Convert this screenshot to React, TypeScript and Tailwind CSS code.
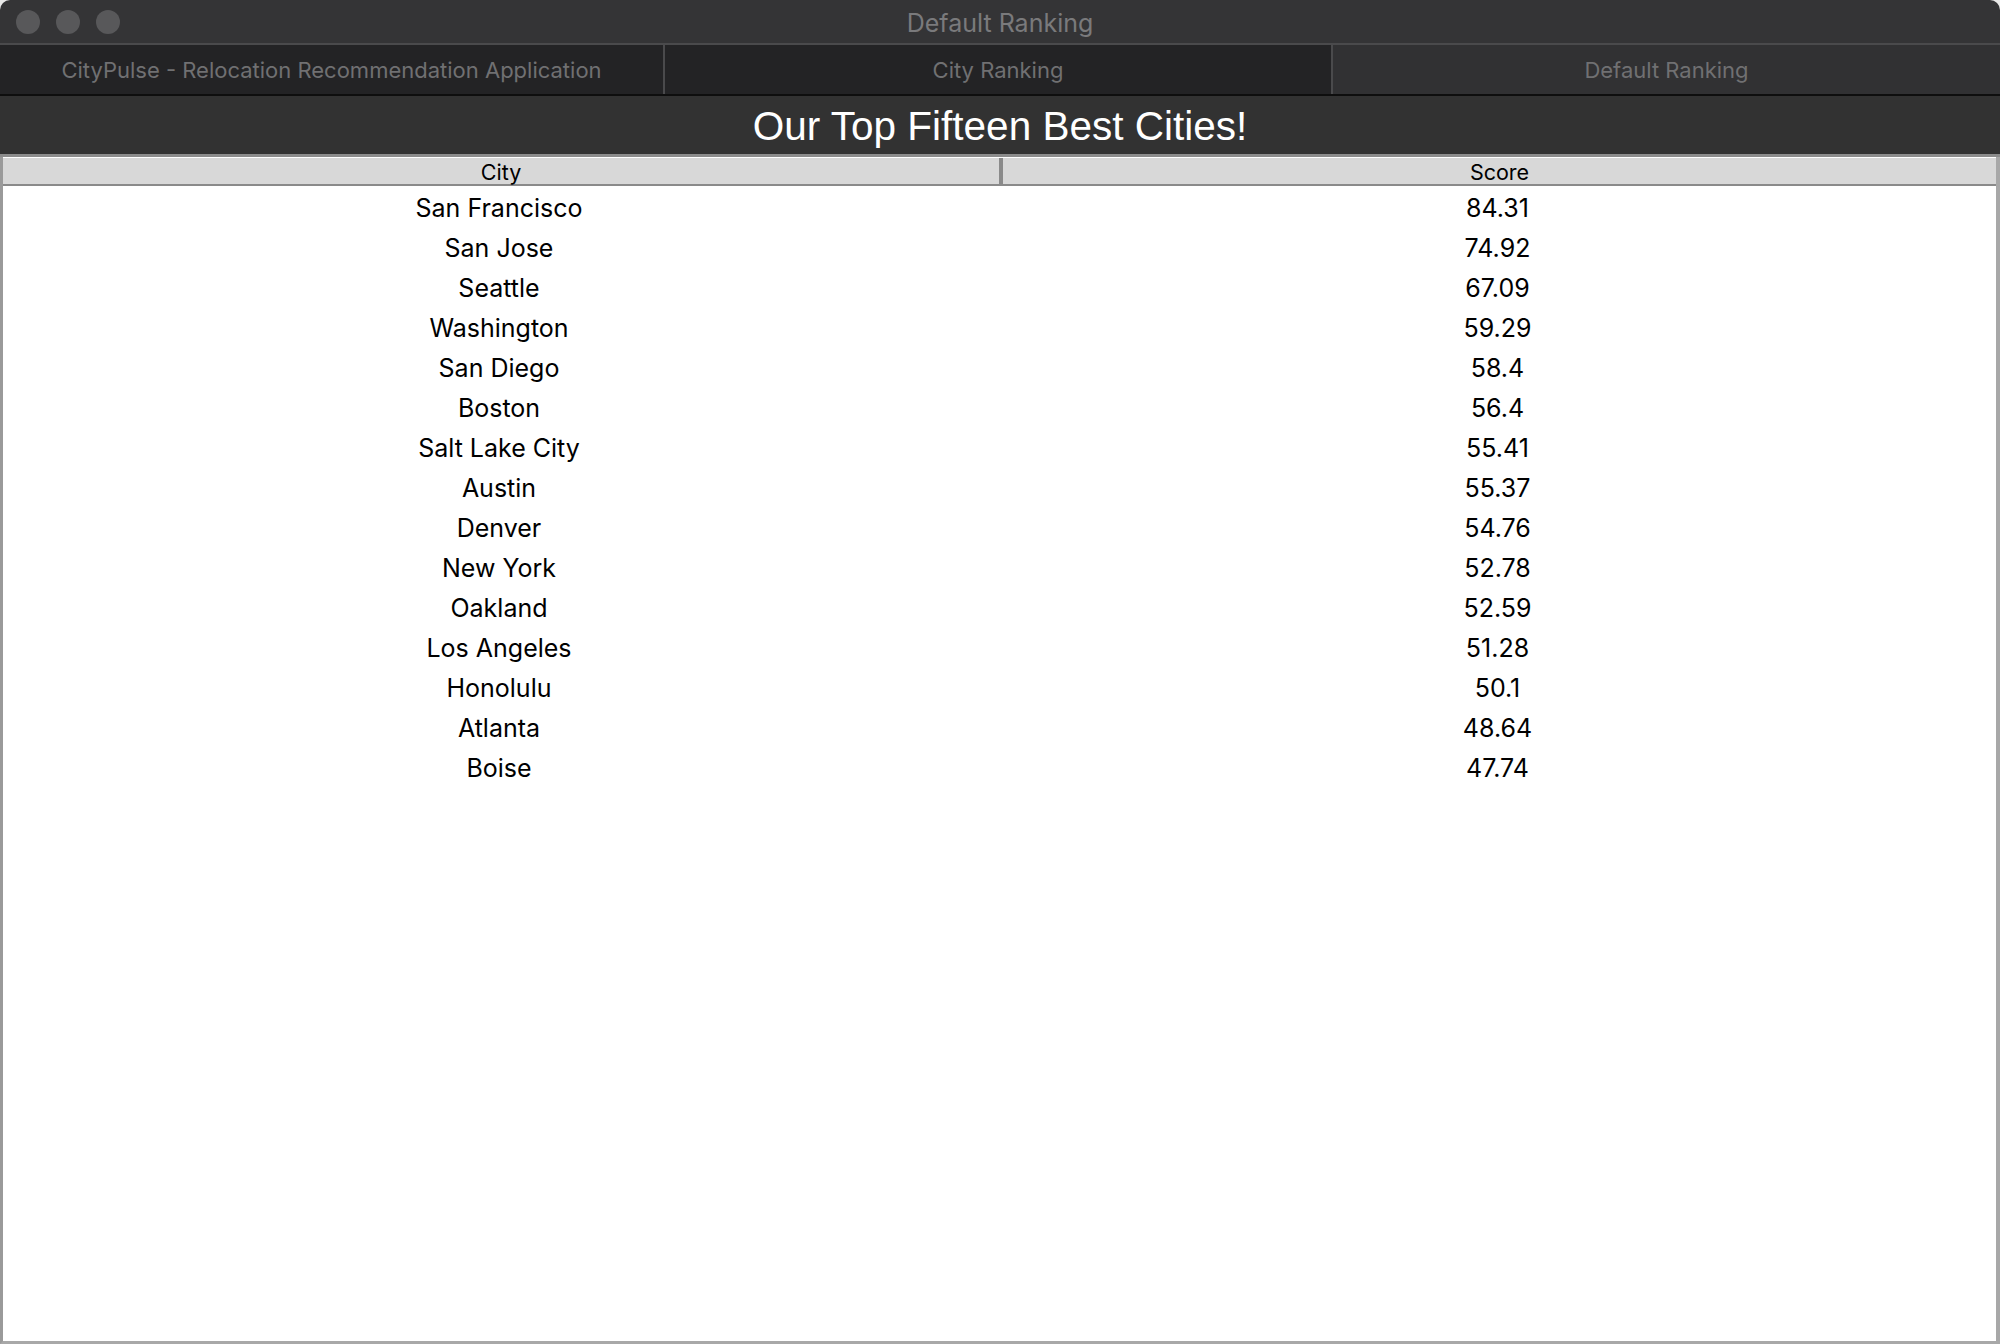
import React from "react";

const rows: [string, string][] = [
  ["San Francisco", "84.31"],
  ["San Jose", "74.92"],
  ["Seattle", "67.09"],
  ["Washington", "59.29"],
  ["San Diego", "58.4"],
  ["Boston", "56.4"],
  ["Salt Lake City", "55.41"],
  ["Austin", "55.37"],
  ["Denver", "54.76"],
  ["New York", "52.78"],
  ["Oakland", "52.59"],
  ["Los Angeles", "51.28"],
  ["Honolulu", "50.1"],
  ["Atlanta", "48.64"],
  ["Boise", "47.74"],
];

export default function App() {
  return (
    <div className="w-[2000px] h-[1344px] bg-[#e8e8e8] overflow-hidden" style={{ fontFamily: "Inter, 'Noto Sans', sans-serif" }}>
      <div className="w-full h-full flex flex-col rounded-t-[10px] overflow-hidden bg-white">
        {/* Title bar */}
        <div className="relative h-[45px] bg-[#343436] border-b-2 border-[#4a4a4c] flex items-center justify-center shrink-0">
          <div className="absolute left-[16px] top-[10px] flex gap-[16px]">
            <div className="w-[24px] h-[24px] rounded-full bg-[#58585a]" />
            <div className="w-[24px] h-[24px] rounded-full bg-[#58585a]" />
            <div className="w-[24px] h-[24px] rounded-full bg-[#58585a]" />
          </div>
          <span className="text-[25px] text-[#7a7a7c] leading-none pt-[4px]">Default Ranking</span>
        </div>
        {/* Tabs */}
        <div className="h-[51px] flex border-b-2 border-[#0e0e0e] shrink-0">
          <div className="w-[665px] bg-[#232325] border-r-2 border-[#4a4a4c] flex items-center justify-center text-[22px] text-[#707072] pt-[2px]">
            CityPulse - Relocation Recommendation Application
          </div>
          <div className="w-[668px] bg-[#232325] border-r-2 border-[#4a4a4c] flex items-center justify-center text-[22px] text-[#707072] pt-[2px]">
            City Ranking
          </div>
          <div className="flex-1 bg-[#313133] flex items-center justify-center text-[22px] text-[#707072] pt-[2px]">
            Default Ranking
          </div>
        </div>
        {/* Heading */}
        <div className="h-[61px] bg-[#323232] border-b-[3px] border-[#8c8c8c] flex items-center justify-center shrink-0">
          <span className="text-[40.5px] text-white leading-none pt-[3px]" style={{ fontFamily: "'Liberation Sans', Arial, sans-serif" }}>
            Our Top Fifteen Best Cities!
          </span>
        </div>
        {/* Table */}
        <div className="flex-1 flex flex-col border-l-[3px] border-r-[4px] border-b-[3px] border-[#a8a8a8] border-l-[#9a9a9a] bg-white">
          <div className="h-[29px] flex bg-white pt-[1px] shrink-0">
            <div className="w-[996px] bg-[#d8d8d8] border-b-[2px] border-[#8a8a8a] flex items-center justify-center text-[21.5px] text-black leading-none pt-[3px]">
              City
            </div>
            <div className="w-[4px] bg-[#8a8a8a]" />
            <div className="flex-1 bg-[#d8d8d8] border-b-[2px] border-[#8a8a8a] flex items-center justify-center text-[21.5px] text-black leading-none pt-[3px]">
              Score
            </div>
          </div>
          <div className="flex flex-col pt-[3px]">
            {rows.map(([city, score]) => (
              <div key={city} className="h-[40px] flex items-center text-[25px] text-black">
                <div className="w-[992px] text-center">{city}</div>
                <div className="flex-1 text-center pl-[4px]">{score}</div>
              </div>
            ))}
          </div>
        </div>
      </div>
    </div>
  );
}
